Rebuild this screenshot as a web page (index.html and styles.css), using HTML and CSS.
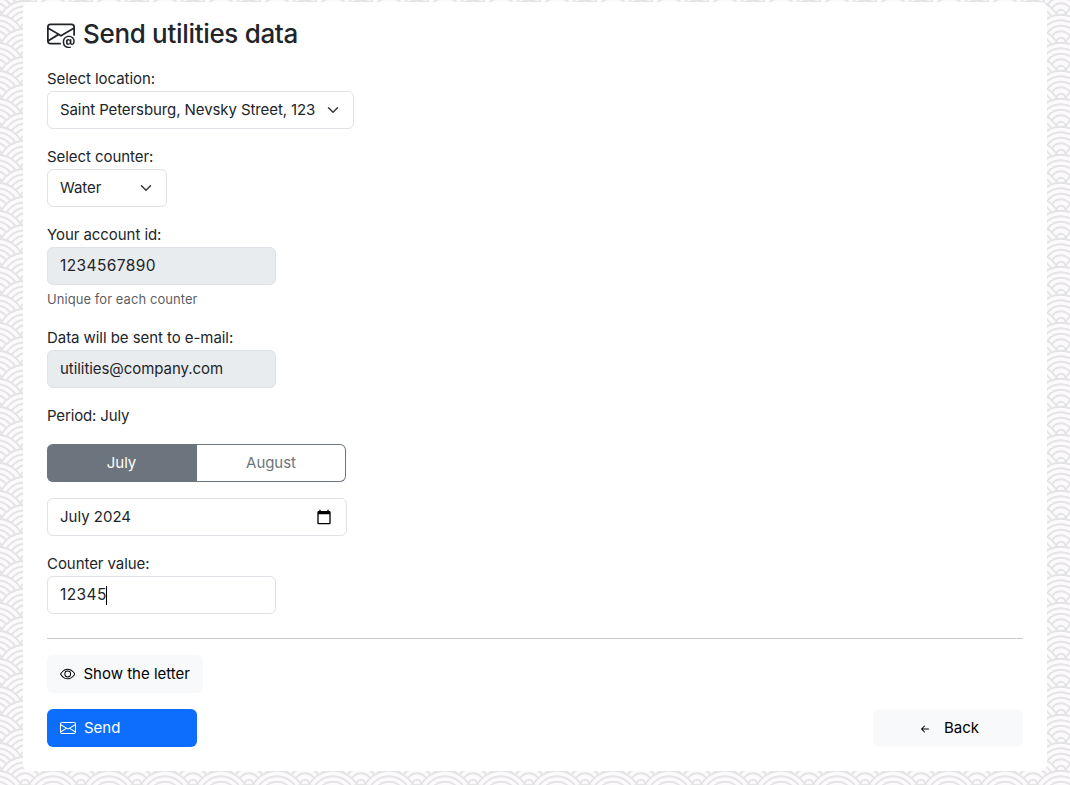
FILE: index.html
```html
<!DOCTYPE html>
<html lang="en">
<head>
<meta charset="utf-8">
<title>Send utilities data</title>
<link rel="stylesheet" href="styles.css">
</head>
<body>
<svg class="waves" width="100%" height="100%" aria-hidden="true">
  <defs>
    <g id="scale">
      <circle r="27.3"/><circle r="21.8"/><circle r="16.3"/><circle r="10.8"/><circle r="4.3"/>
    </g>
    <pattern id="seigaiha" x="25" y="0" width="56" height="28" patternUnits="userSpaceOnUse">
      <g class="scales">
        <use href="#scale" x="0" y="0"/><use href="#scale" x="56" y="0"/>
        <use href="#scale" x="28" y="14"/>
        <use href="#scale" x="0" y="28"/><use href="#scale" x="56" y="28"/>
        <use href="#scale" x="28" y="42"/>
        <use href="#scale" x="0" y="56"/><use href="#scale" x="56" y="56"/>
      </g>
    </pattern>
  </defs>
  <rect width="100%" height="100%" fill="url(#seigaiha)"/>
</svg>
<main class="card">
  <h1 class="title">
    <svg class="title-icon" width="28" height="28" viewBox="0 0 16 16" fill="currentColor"><path d="M2 2a2 2 0 0 0-2 2v8.01A2 2 0 0 0 2 14h5.5a.5.5 0 0 0 0-1H2a1 1 0 0 1-.966-.741l5.64-3.471L8 9.583l7-4.2V8.5a.5.5 0 0 0 1 0V4a2 2 0 0 0-2-2zm3.708 6.208L1 11.105V5.383zM1 4.217V4a1 1 0 0 1 1-1h12a1 1 0 0 1 1 1v.217l-7 4.2z"/><path d="M14.247 14.269c1.01 0 1.587-.857 1.587-2.025v-.21C15.834 10.43 14.64 9 12.52 9h-.035C10.42 9 9 10.36 9 12.432v.214C9 14.82 10.438 16 12.358 16h.044c.594 0 1.018-.074 1.237-.175v-.73c-.245.11-.673.18-1.18.18h-.044c-1.334 0-2.571-.788-2.571-2.655v-.157c0-1.657 1.058-2.724 2.64-2.724h.04c1.535 0 2.484 1.05 2.484 2.326v.118c0 .975-.324 1.39-.639 1.39-.232 0-.41-.148-.41-.42v-2.19h-.906v.569h-.03c-.084-.298-.368-.63-.954-.63-.778 0-1.259.555-1.259 1.4v.528c0 .892.49 1.434 1.26 1.434.471 0 .896-.227 1.014-.643h.043c.118.42.617.648 1.12.648m-2.453-1.588v-.227c0-.546.227-.791.573-.791.297 0 .572.192.572.708v.367c0 .573-.253.744-.564.744-.354 0-.581-.215-.581-.8Z"/></svg>
    <span>Send utilities data</span>
  </h1>

  <div class="field">
    <label>Select location:</label>
    <div class="control select select-location"><span>Saint Petersburg, Nevsky Street, 123</span><svg width="16" height="12" viewBox="0 0 16 16"><path class="chevron" d="m2 5 6 6 6-6"/></svg></div>
  </div>
  <div class="field">
    <label>Select counter:</label>
    <div class="control select select-counter"><span>Water</span><svg width="16" height="12" viewBox="0 0 16 16"><path class="chevron" d="m2 5 6 6 6-6"/></svg></div>
  </div>
  <div class="field">
    <label>Your account id:</label>
    <div class="control input disabled digits">1234567890</div>
    <div class="hint">Unique for each counter</div>
  </div>
  <div class="field">
    <label>Data will be sent to e-mail:</label>
    <div class="control input disabled">utilities@company.com</div>
  </div>
  <div class="period">Period: July</div>
  <div class="toggle">
    <span class="option active">July</span>
    <span class="option">August</span>
  </div>
  <div class="control month"><span>July 2024</span><svg width="16" height="16" viewBox="0 0 24 24"><path d="M20 3h-1V1h-2v2H7V1H5v2H4c-1.100 0-2 .9-2 2v16c0 1.100.9 2 2 2h16c1.100 0 2-.9 2-2V5c0-1.100-.9-2-2-2zm0 18H4V8h16v13z"/></svg></div>
  <div class="field value">
    <label>Counter value:</label>
    <div class="control input digits">12345<span class="caret"></span></div>
  </div>

  <hr class="rule">

  <div class="btn show">
    <svg width="16" height="16" viewBox="0 0 16 16" fill="currentColor"><path d="M16 8s-3-5.500-8-5.500S0 8 0 8s3 5.500 8 5.500S16 8 16 8M1.173 8a13 13 0 0 1 1.660-2.043C4.120 4.668 5.880 3.500 8 3.500s3.879 1.168 5.168 2.457A13 13 0 0 1 14.828 8q-.086.13-.195.288c-.335.48-.83 1.120-1.465 1.755C11.879 11.332 10.119 12.500 8 12.500s-3.879-1.168-5.168-2.457A13 13 0 0 1 1.172 8z"/><path d="M8 5.500a2.500 2.500 0 1 0 0 5 2.500 2.500 0 0 0 0-5M4.500 8a3.500 3.500 0 1 1 7 0 3.500 3.500 0 0 1-7 0"/></svg>
    <span>Show the letter</span>
  </div>
  <div class="actions">
    <div class="btn send">
      <svg width="16" height="16" viewBox="0 0 16 16" fill="currentColor"><path d="M0 4a2 2 0 0 1 2-2h12a2 2 0 0 1 2 2v8a2 2 0 0 1-2 2H2a2 2 0 0 1-2-2zm2-1a1 1 0 0 0-1 1v.217l7 4.200 7-4.200V4a1 1 0 0 0-1-1zm13 2.383-4.708 2.825L15 11.105zm-.034 6.876-5.640-3.471L8 9.583l-1.326-.795-5.640 3.470A1 1 0 0 0 2 13h12a1 1 0 0 0 .966-.741M1 11.105l4.708-2.897L1 5.383z"/></svg>
      <span>Send</span>
    </div>
    <div class="btn back">
      <svg width="16" height="16" viewBox="0 0 16 16" fill="currentColor"><path fill-rule="evenodd" d="M12 8a.5.5 0 0 1-.5.5H5.707l2.147 2.146a.5.5 0 0 1-.708.708l-3-3a.5.5 0 0 1 0-.708l3-3a.5.5 0 1 1 .708.708L5.707 7.500H11.500a.5.5 0 0 1 .5.5"/></svg>
      <span>Back</span>
    </div>
  </div>
</main>
</body>
</html>
```
FILE: styles.css
```css
* { box-sizing: border-box; }
body {
  margin: 0;
  height: 785px;
  overflow: hidden;
  padding: 2px 23px 0;
  background: #fcfafd;
  color: #212529;
  font: 400 15px/24px Inter, sans-serif;
  letter-spacing: -.06px;
  white-space: nowrap;
}
.waves { position: absolute; inset: 0; z-index: -1; }
.scales { fill: #fcfafd; stroke: #e4e4e5; stroke-width: 1.9; }
.card {
  height: 769px;
  padding: 15px 24px 0;
  background: #fff;
  border-radius: 6px;
}
.title {
  display: flex;
  align-items: center;
  gap: 8px;
  margin: 0 0 16px;
  font-size: 26px;
  line-height: 34px;
  font-weight: 500;
  letter-spacing: -.32px;
}
.field { margin-bottom: 16px; }
label { display: block; }
.control {
  display: flex;
  align-items: center;
  height: 38px;
  padding: 0 12px;
  border: 1px solid #dee2e6;
  border-radius: 6px;
  background: #fff;
}
.control > span, .digits { padding-bottom: 1px; }
.digits { font-size: 15.5px; letter-spacing: .4px; }
.select { justify-content: space-between; }
.select-location { width: 307px; letter-spacing: -.09px; }
.select-counter { width: 120px; }
.chevron { fill: none; stroke: #343a40; stroke-width: 2; stroke-linecap: round; stroke-linejoin: round; }
.input { width: 229px; }
.disabled { background: #e9ecef; }
.hint { margin-top: 4px; font-size: 13px; line-height: 21px; letter-spacing: .06px; color: rgba(33, 37, 41, .75); }
.period { margin-bottom: 16px; letter-spacing: -.15px; }
.toggle { display: flex; width: 299px; height: 38px; margin-bottom: 16px; }
.option {
  flex: 1;
  line-height: 35px;
  text-align: center;
  color: #6c757d;
  border: 1px solid #6c757d;
  border-left: 0;
  border-radius: 0 6px 6px 0;
}
.option.active { flex: 0 0 150px; color: #fff; background: #6c757d; border-radius: 6px 0 0 6px; }
.month { width: 300px; justify-content: space-between; margin-bottom: 16px; padding-right: 14px; letter-spacing: 0; }
.control .caret { width: 1px; height: 19px; margin: 1px 0 0 -1px; padding: 0; background: #000; }
.value { margin-bottom: 0; }
.rule { margin: 24px 0 16px; border: 0; border-top: 1px solid #c8c9ca; }
.btn {
  display: flex;
  align-items: center;
  gap: 8px;
  height: 38px;
  padding: 0 13px;
  border-radius: 6px;
  background: #f8f9fa;
  color: #000;
  letter-spacing: 0;
}
.btn span { padding-bottom: 1px; }
.show { width: 156px; margin-bottom: 16px; }
.actions { display: flex; justify-content: space-between; }
.send { width: 150px; background: #0d6efd; color: #fff; }
.back { width: 150px; justify-content: center; gap: 11px; padding-left: 13px; }
.back svg { margin-top: 1px; }
```
